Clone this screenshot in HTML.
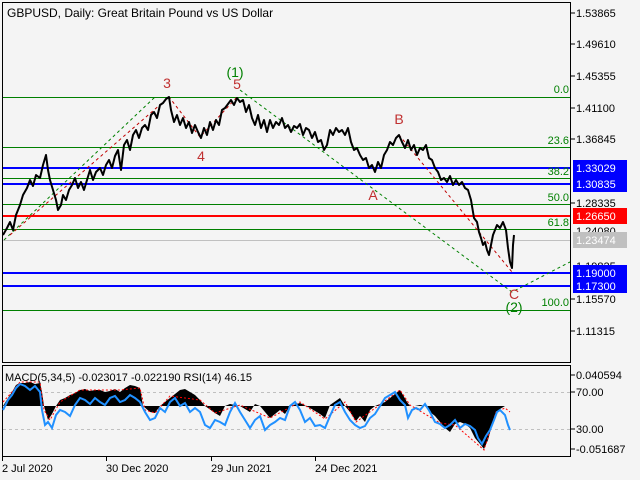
<!DOCTYPE html>
<html><head><style>
html,body{margin:0;padding:0;background:#f4f4f4;}
svg{display:block;font-family:"Liberation Sans",sans-serif;}
</style></head><body>
<svg width="640" height="480" viewBox="0 0 640 480" xmlns="http://www.w3.org/2000/svg">
<rect width="640" height="480" fill="#f4f4f4"/>
<!-- panels -->
<rect x="2.5" y="2.5" width="568" height="360" fill="#f4f4f4" stroke="#000" stroke-width="1"/>
<rect x="2.5" y="365.5" width="568" height="91" fill="#f4f4f4" stroke="#000" stroke-width="1"/>
<text x="7" y="17" font-size="12" fill="#000">GBPUSD, Daily:  Great Britain Pound vs US Dollar</text>
<!-- horizontal lines -->
<g stroke="#008000" stroke-width="1">
<line x1="3" y1="97.5" x2="570" y2="97.5"/>
<line x1="3" y1="147.5" x2="570" y2="147.5"/>
<line x1="3" y1="178.5" x2="570" y2="178.5"/>
<line x1="3" y1="204.5" x2="570" y2="204.5"/>
<line x1="3" y1="229.5" x2="570" y2="229.5"/>
<line x1="3" y1="310.5" x2="570" y2="310.5"/>
</g>
<line x1="3" y1="240.5" x2="570" y2="240.5" stroke="#c0c0c0"/>
<g stroke="#0000ff" stroke-width="2">
<line x1="3" y1="168" x2="570" y2="168"/>
<line x1="3" y1="184" x2="570" y2="184"/>
<line x1="3" y1="273" x2="570" y2="273"/>
<line x1="3" y1="286" x2="570" y2="286"/>
</g>
<line x1="3" y1="216" x2="570" y2="216" stroke="#ff0000" stroke-width="2"/>
<!-- fib labels -->
<g fill="#008000" font-size="11" text-anchor="end">
<text x="569" y="93">0.0</text>
<text x="569" y="144">23.6</text>
<text x="569" y="175">38.2</text>
<text x="569" y="201">50.0</text>
<text x="569" y="226">61.8</text>
<text x="569" y="306">100.0</text>
</g>
<!-- dashed wave lines -->
<g fill="none" stroke-dasharray="3,3" stroke-width="1">
<polyline stroke="#008000" points="4,240 155,97"/>
<polyline stroke="#c00000" points="10,235 169,97 200,137 237,97"/>
<polyline stroke="#008000" points="240,90 512,292 570,262"/>
<polyline stroke="#c00000" points="399,135 512,272"/>
</g>
<!-- price -->
<polyline fill="none" stroke="#000" stroke-width="2" stroke-linejoin="round" points="3,235 7,228 10,222 13,230 16,215 20,205 23,195 27,188 30,180 33,186 36,175 40,178 43,165 46,155 48,170 50,180 53,190 56,200 58,210 61,205 63,195 66,200 69,190 72,185 75,178 78,188 81,182 84,190 87,180 90,170 93,180 96,172 100,168 103,175 106,165 109,160 112,168 115,156 118,150 121,170 124,145 127,140 130,150 133,135 136,130 139,138 142,128 145,125 148,130 151,115 154,112 157,118 160,105 163,103 166,99 169,97 171,110 174,122 177,115 180,125 183,118 186,128 189,122 192,133 195,125 198,132 201,138 204,128 207,135 210,122 213,130 216,120 219,125 222,110 225,108 228,104 231,100 234,105 237,98 240,102 243,100 246,112 249,105 252,118 255,125 258,115 261,128 264,120 267,132 270,120 273,128 276,122 279,125 282,118 285,128 288,125 291,132 294,126 297,128 300,124 303,135 306,128 309,130 312,138 315,132 318,142 321,140 324,150 327,145 330,130 333,135 336,128 339,132 342,130 345,135 348,128 351,142 354,150 357,148 360,155 363,160 366,158 369,168 372,165 375,172 378,162 381,168 384,155 387,150 390,142 393,145 396,138 399,135 402,142 405,148 408,140 411,150 414,145 417,155 420,148 423,150 426,145 429,158 432,160 435,168 438,172 441,180 444,178 447,182 450,176 453,185 456,180 459,185 462,182 465,188 468,190 471,200 474,218 477,222 479,232 481,238 483,245 485,242 487,250 489,255 491,245 493,235 495,230 497,225 500,228 503,222 506,230 508,248 510,262 512,268 513,245 514,235"/>
<!-- wave labels -->
<g font-size="14" text-anchor="middle">
<text x="167" y="88" fill="#c03030">3</text>
<text x="235" y="77" fill="#008000">(1)</text>
<text x="237" y="89" fill="#c03030">5</text>
<text x="201" y="161" fill="#c03030">4</text>
<text x="399" y="124" fill="#c03030">B</text>
<text x="373" y="200" fill="#c03030">A</text>
<text x="514" y="299" fill="#c03030">C</text>
<text x="514" y="312" fill="#008000">(2)</text>
</g>
<!-- price axis -->
<g stroke="#000">
<line x1="570" y1="13" x2="575" y2="13"/><line x1="570" y1="44" x2="575" y2="44"/>
<line x1="570" y1="76" x2="575" y2="76"/><line x1="570" y1="108" x2="575" y2="108"/>
<line x1="570" y1="139" x2="575" y2="139"/><line x1="570" y1="203" x2="575" y2="203"/>
<line x1="570" y1="299" x2="575" y2="299"/><line x1="570" y1="331" x2="575" y2="331"/>
<line x1="570" y1="375" x2="575" y2="375"/><line x1="570" y1="392" x2="575" y2="392"/>
<line x1="570" y1="429" x2="575" y2="429"/><line x1="570" y1="449" x2="575" y2="449"/>
</g>
<g font-size="11" fill="#000">
<text x="576" y="17">1.53865</text><text x="576" y="48">1.49610</text>
<text x="576" y="80">1.45355</text><text x="576" y="112">1.41100</text>
<text x="576" y="143">1.36845</text><text x="576" y="207">1.28335</text>
<text x="576" y="235">1.24080</text><text x="576" y="270">1.19825</text>
<text x="576" y="303">1.15570</text><text x="576" y="335">1.11315</text>
</g>
<rect x="573" y="160" width="54" height="16" fill="#0000ff"/><text x="576" y="172" font-size="11" fill="#fff">1.33029</text>
<rect x="573" y="176" width="54" height="16" fill="#0000ff"/><text x="576" y="188" font-size="11" fill="#fff">1.30835</text>
<rect x="573" y="208" width="54" height="16" fill="#ff0000"/><text x="576" y="220" font-size="11" fill="#fff">1.26650</text>
<rect x="573" y="232" width="54" height="16" fill="#c0c0c0"/><text x="576" y="244" font-size="11" fill="#fff">1.23474</text>
<rect x="573" y="265" width="54" height="14" fill="#0000ff"/><text x="576" y="277" font-size="11" fill="#fff">1.19000</text>
<rect x="573" y="279" width="54" height="14" fill="#0000ff"/><text x="576" y="290" font-size="11" fill="#fff">1.17300</text>
<!-- MACD panel -->
<line x1="3" y1="392.5" x2="570" y2="392.5" stroke="#c0c0c0" stroke-dasharray="3,3"/>
<line x1="3" y1="429.5" x2="570" y2="429.5" stroke="#c0c0c0" stroke-dasharray="3,3"/>
<polygon fill="#000" points="3,406 8,398 12,392 16,385 20,383 25,383 30,382 35,384 40,383 42,392 44,406 48,420 52,414 56,406 60,400 65,398 70,395 75,393 80,390 85,389 90,391 95,390 100,390 105,392 110,391 115,389 120,392 125,388 130,385 135,386 140,388 143,406 150,412 155,413 160,406 170,398 175,394 180,390 185,389 190,392 195,395 200,400 205,406 215,413 220,416 225,406 230,404 240,406 250,412 255,404 260,406 265,412 270,418 275,414 280,410 285,414 290,406 300,403 310,408 320,414 325,418 330,405 340,398 345,406 350,412 356,421 360,416 365,422 370,410 375,406 380,404 385,402 390,398 395,394 400,390 403,395 407,402 410,406 415,406 420,405 425,406 430,412 435,416 440,422 445,428 450,432 455,424 460,422 465,424 470,428 475,438 480,444 484,449 488,440 492,425 496,412 500,409 505,406 510,406 510,406 3,406"/>
<polyline fill="none" stroke="#ff0000" stroke-width="1" stroke-dasharray="2,2" points="3,402 12,392 20,382 40,382 44,410 50,420 60,402 80,390 120,390 140,388 145,410 155,413 170,396 200,400 215,413 240,405 270,418 300,402 325,419 345,402 356,422 400,390 410,405 440,423 455,425 484,450 496,412 505,408 510,412"/>
<polyline fill="none" stroke="#2090ff" stroke-width="2" points="3,410 8,400 12,395 16,388 20,384 25,386 30,390 35,386 40,392 42,410 45,425 48,422 52,428 56,415 60,410 65,412 70,416 75,405 80,398 85,400 90,404 95,398 100,402 105,405 110,398 115,396 120,402 125,400 130,395 135,398 140,402 145,412 150,420 155,418 160,408 165,412 170,402 175,398 180,406 185,403 190,412 195,408 200,412 205,425 210,428 215,420 220,422 225,425 230,412 235,403 240,412 245,420 250,428 255,420 260,416 265,430 270,425 275,422 280,418 285,420 290,406 295,402 300,410 305,422 310,418 315,426 320,425 325,428 330,416 335,405 340,402 345,412 350,420 355,425 360,428 365,426 370,418 375,414 380,406 385,398 390,395 395,392 400,400 405,405 408,418 412,410 416,408 420,410 425,404 430,412 435,422 440,424 445,428 450,425 455,420 460,428 465,424 470,426 475,430 478,438 482,444 486,436 490,430 494,420 497,412 500,410 505,415 508,425 510,430"/>
<text x="5" y="381" font-size="11" fill="#000">MACD(5,34,5) -0.023017 -0.022190 RSI(14) 46.15</text>
<g font-size="11" fill="#000">
<text x="576" y="379">0.040594</text><text x="576" y="396">70.00</text>
<text x="576" y="433">30.00</text><text x="576" y="453">-0.051687</text>
</g>
<!-- date axis -->
<g stroke="#000"><line x1="2.5" y1="457" x2="2.5" y2="461"/><line x1="106.5" y1="457" x2="106.5" y2="461"/><line x1="211.5" y1="457" x2="211.5" y2="461"/><line x1="315.5" y1="457" x2="315.5" y2="461"/></g>
<g font-size="11" fill="#000">
<text x="2" y="472">2 Jul 2020</text><text x="106" y="472">30 Dec 2020</text>
<text x="211" y="472">29 Jun 2021</text><text x="315" y="472">24 Dec 2021</text>
</g>
</svg>
</body></html>
